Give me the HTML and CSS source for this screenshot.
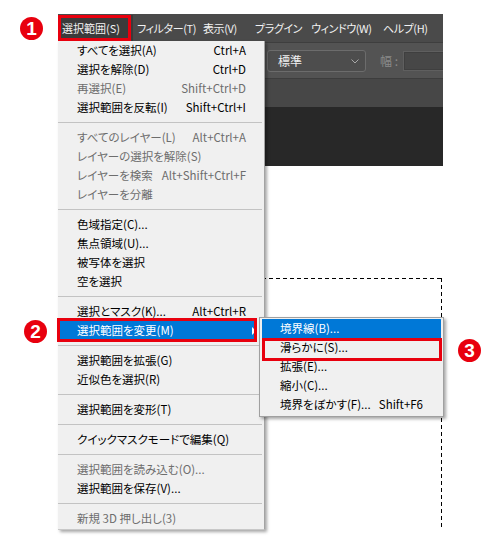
FILE: index.html
```html
<!DOCTYPE html>
<html lang="ja">
<head>
<meta charset="utf-8">
<title>選択範囲メニュー</title>
<link rel="stylesheet" href="styles.css">
</head>
<body>
<div class="stage">
  <div class="app">
    <div class="menubar">
      <span class="mb-item mb-active">選択範囲(S)</span>
      <span class="mb-item">フィルター(T)</span>
      <span class="mb-item">表示(V)</span>
      <span class="mb-item">プラグイン</span>
      <span class="mb-item">ウィンドウ(W)</span>
      <span class="mb-item">ヘルプ(H)</span>
    </div>
    <div class="options">
      <div class="select">
        <span>標準</span>
        <svg class="chev" width="8" height="5" viewBox="0 0 8 5"><polyline points="0.5,0.5 4,4 7.5,0.5" fill="none" stroke="#a8a8a8" stroke-width="1"/></svg>
      </div>
      <span class="opt-label">幅 :</span>
      <div class="field"></div>
    </div>
    <div class="tabbar"></div>
    <div class="docbar"></div>
    <div class="canvas"><div class="marquee"></div></div>
  </div>

  <div class="menu">
    <div class="row"><span>すべてを選択(A)</span><span>Ctrl+A</span></div>
    <div class="row"><span>選択を解除(D)</span><span>Ctrl+D</span></div>
    <div class="row off"><span>再選択(E)</span><span>Shift+Ctrl+D</span></div>
    <div class="row"><span>選択範囲を反転(I)</span><span>Shift+Ctrl+I</span></div>
    <div class="sep"></div>
    <div class="row off"><span>すべてのレイヤー(L)</span><span>Alt+Ctrl+A</span></div>
    <div class="row off"><span>レイヤーの選択を解除(S)</span></div>
    <div class="row off"><span>レイヤーを検索</span><span>Alt+Shift+Ctrl+F</span></div>
    <div class="row off"><span>レイヤーを分離</span></div>
    <div class="sep"></div>
    <div class="row"><span>色域指定(C)...</span></div>
    <div class="row"><span>焦点領域(U)...</span></div>
    <div class="row"><span>被写体を選択</span></div>
    <div class="row"><span>空を選択</span></div>
    <div class="sep"></div>
    <div class="row"><span>選択とマスク(K)...</span><span>Alt+Ctrl+R</span></div>
    <div class="row hl sub"><span>選択範囲を変更(M)</span></div>
    <div class="sep"></div>
    <div class="row"><span>選択範囲を拡張(G)</span></div>
    <div class="row"><span>近似色を選択(R)</span></div>
    <div class="sep"></div>
    <div class="row"><span>選択範囲を変形(T)</span></div>
    <div class="sep"></div>
    <div class="row"><span>クイックマスクモードで編集(Q)</span></div>
    <div class="sep"></div>
    <div class="row off"><span>選択範囲を読み込む(O)...</span></div>
    <div class="row"><span>選択範囲を保存(V)...</span></div>
    <div class="sep"></div>
    <div class="row off"><span>新規 3D 押し出し(3)</span></div>
  </div>

  <div class="submenu">
    <div class="srow hl"><span>境界線(B)...</span></div>
    <div class="srow"><span>滑らかに(S)...</span></div>
    <div class="srow"><span>拡張(E)...</span></div>
    <div class="srow"><span>縮小(C)...</span></div>
    <div class="srow"><span>境界をぼかす(F)...</span><span>Shift+F6</span></div>
  </div>

  <div class="mark mark-1"></div>
  <div class="mark mark-2"></div>
  <div class="mark mark-3"></div>

  <div class="badge badge-1">1</div>
  <div class="badge badge-2">2</div>
  <div class="badge badge-3">3</div>
</div>
</body>
</html>
```

FILE: styles.css
```css
* { box-sizing: border-box; }
html, body { margin: 0; padding: 0; background: #fff; }
body {
  width: 486px;
  height: 542px;
  overflow: hidden;
  font-family: "Noto Sans CJK JP", "Noto Sans", sans-serif;
  font-feature-settings: "palt";
  font-size: 11.5px;
}
.stage {
  position: relative;
  width: 486px;
  height: 542px;
  padding: 14px 0 0 58px;
}
.app {
  width: 385px;
  height: 516px;
  overflow: hidden;
  display: flex;
  flex-direction: column;
}
.menubar {
  height: 28px;
  background: #4a4a4a;
  display: flex;
  align-items: center;
  color: #f2f2f2;
  font-size: 11px;
  letter-spacing: -0.4px;
}
.mb-item {
  flex: none;
  height: 26px;
  line-height: 26px;
  padding: 0 4px;
  white-space: nowrap;
}
.mb-item:nth-child(1) { width: 75px; letter-spacing: 0; }
.mb-item:nth-child(2) { width: 66px; }
.mb-item:nth-child(3) { width: 52px; }
.mb-item:nth-child(4) { width: 56px; }
.mb-item:nth-child(5) { width: 72px; }
.mb-item:nth-child(6) { width: 60px; }
.mb-active { background: #3b3b3b; }
.options {
  height: 36px;
  background: #535353;
  border-top: 1px solid #3e3e3e;
  display: flex;
  align-items: center;
  padding-left: 209px;
}
.select {
  width: 99px;
  height: 22px;
  flex: none;
  border: 1px solid #6c6c6c;
  border-radius: 3px;
  background: #4d4d4d;
  color: #f0f0f0;
  display: flex;
  align-items: center;
  justify-content: space-between;
  padding: 0 6px 0 10px;
  font-size: 12px;
  line-height: 20px;
}
.chev { margin-top: 2px; }
.opt-label {
  margin-left: 14px;
  color: #8a8a8a;
  font-size: 12px;
  white-space: nowrap;
}
.field {
  margin-left: 5px;
  width: 60px;
  height: 20px;
  flex: none;
  border: 1px solid #5f5f5f;
  background: #474747;
  box-shadow: inset 0 0 0 1px #3f3f3f;
}
.tabbar {
  height: 29px;
  background: #474747;
  border-top: 1px solid #3d3d3d;
}
.docbar {
  height: 59px;
  background: #282828;
}
.canvas {
  flex: none;
  height: 364px;
  background: #fff;
  overflow: hidden;
}
.marquee {
  margin: 112px 0 0 120px;
  width: 264px;
  height: 420px;
  background:
    repeating-linear-gradient(90deg, #000 0 4px, transparent 4px 7px) left top / 100% 1px no-repeat,
    repeating-linear-gradient(180deg, #000 0 4px, transparent 4px 7px) right top / 1px 100% no-repeat;
}

/* dropdown menu */
.menu {
  position: absolute;
  left: 58px;
  top: 41px;
  width: 207px;
  background: #f0f0f0;
  border-right: 1px solid #a3a3a3;
  border-bottom: 1px solid #c8c8c8;
  box-shadow: 2px 2px 3px rgba(0, 0, 0, 0.35);
  padding: 0 0 1px 0;
  color: #000;
}
.row {
  position: relative;
  height: 19px;
  line-height: 19px;
  display: flex;
  justify-content: space-between;
  padding: 0 18px 0 19px;
  white-space: nowrap;
}
.row.off { color: #6d6d6d; }
.row.hl {
  background: #0078d7;
  color: #fff;
  margin: 0 8px 0 2px;
  padding-left: 17px;
}
.row.sub::after {
  content: "";
  position: absolute;
  right: 0;
  top: 6px;
  border-left: 4px solid #fff;
  border-top: 4px solid transparent;
  border-bottom: 4px solid transparent;
}
.sep {
  height: 11px;
  position: relative;
}
.sep::before {
  content: "";
  position: absolute;
  left: 0;
  right: 2px;
  top: 5px;
  height: 1px;
  background: #c3c3c3;
}

/* submenu */
.submenu {
  position: absolute;
  left: 259px;
  top: 317px;
  width: 185px;
  background: #f0f0f0;
  border: 1px solid #a0a0a0;
  box-shadow: 2px 2px 3px rgba(0, 0, 0, 0.35);
  padding: 1px 2px 2px 2px;
  color: #000;
}
.srow {
  height: 19px;
  line-height: 19px;
  display: flex;
  justify-content: space-between;
  padding: 0 18px 0 18px;
  white-space: nowrap;
}
.srow.hl { background: #0078d7; color: #fff; }

/* annotation boxes */
.mark {
  position: absolute;
  border: 3px solid #e8000e;
}
.mark-1 { left: 58px; top: 15px; width: 73px; height: 26px; }
.mark-2 { left: 57px; top: 318px; width: 200px; height: 24px; }
.mark-3 { left: 262px; top: 338px; width: 180px; height: 23px; }

.badge {
  position: absolute;
  width: 23px;
  height: 23px;
  border-radius: 50%;
  background: #e8000e;
  color: #fff;
  font-family: "Liberation Sans", Arial, sans-serif;
  font-weight: bold;
  font-size: 19px;
  line-height: 23px;
  text-align: center;
}
.badge-1 { left: 20px; top: 17px; }
.badge-2 { left: 24px; top: 320px; }
.badge-3 { left: 458px; top: 339px; }
```
